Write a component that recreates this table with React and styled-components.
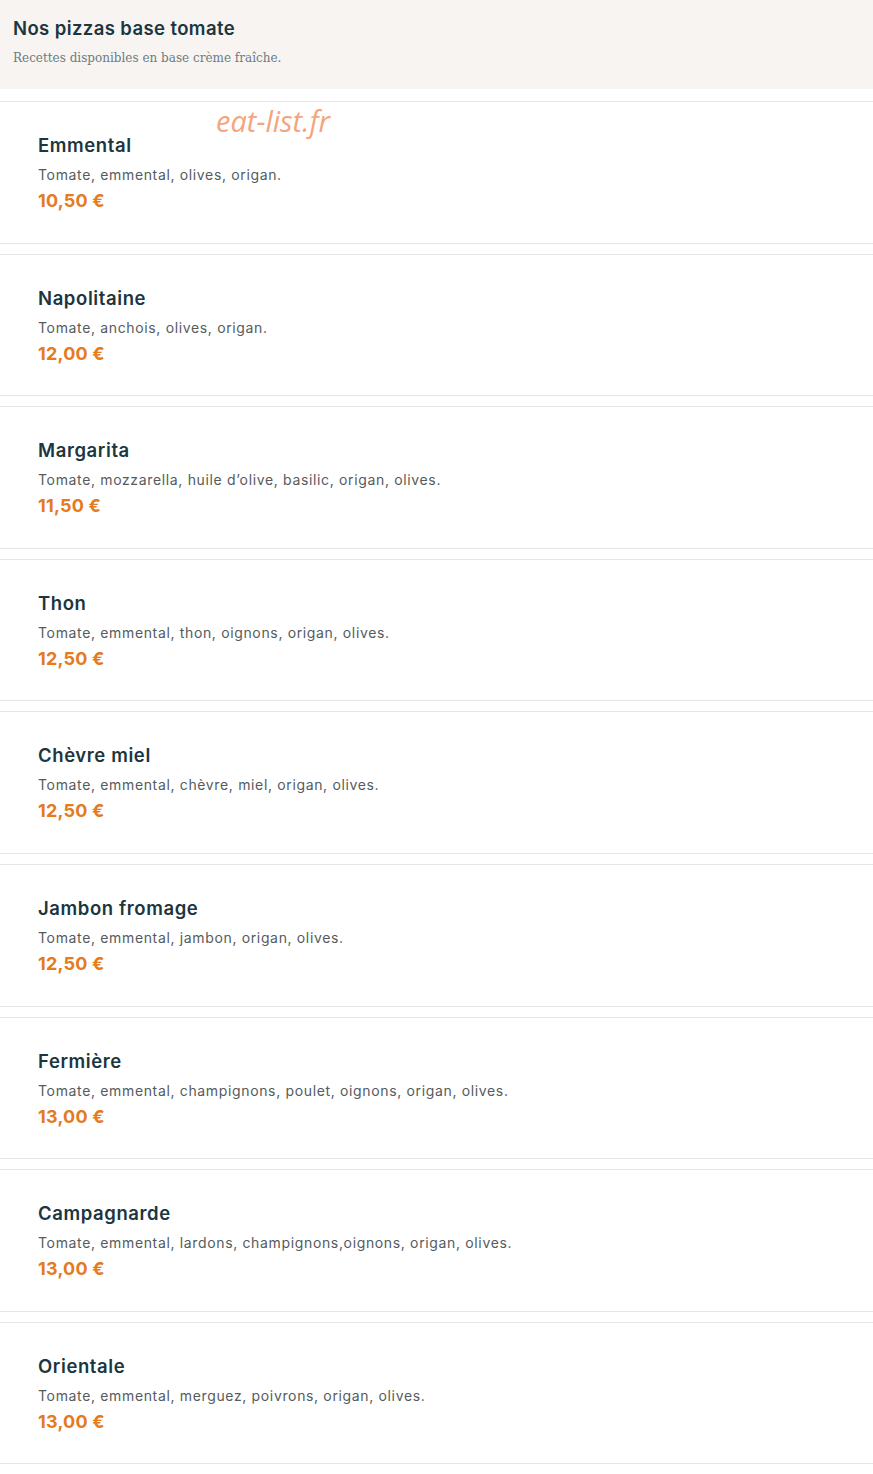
import React from 'react';
import styled, { createGlobalStyle } from 'styled-components';

const GlobalStyle = createGlobalStyle`
  body {
    margin: 0;
    background: #ffffff;
    font-family: 'Inter', 'Noto Sans', sans-serif;
  }
`;

const Page = styled.div`
  position: relative;
  width: 873px;
  padding-bottom: 10px;
`;

const Header = styled.header`
  background: #f7f4f1;
  height: 89px;
  box-sizing: border-box;
  padding: 16px 13px 0;

  h2 {
    margin: 0;
    font-family: 'Inter', sans-serif;
    font-size: 18.5px;
    font-weight: 600;
    line-height: 24px;
    color: #1b3640;
    letter-spacing: 0.4px;
  }

  p {
    margin: 10px 0 0;
    font-family: 'DejaVu Serif', serif;
    font-size: 12px;
    font-weight: 300;
    line-height: 16px;
    color: #6d7b82;
  }
`;

const List = styled.div`
  display: flex;
  flex-direction: column;
  gap: 10px;
  margin-top: 12px;
`;

const Card = styled.div`
  border-top: 1px solid #e6e6e6;
  border-bottom: 1px solid #e6e6e6;
  padding: 31px 38px 29.6px;

  h3 {
    margin: 0;
    font-size: 18.5px;
    font-weight: 600;
    line-height: 24px;
    color: #1b3640;
    letter-spacing: 0.6px;
  }

  p {
    margin: 8px 0 0;
    font-size: 14px;
    line-height: 20px;
    color: #555b5e;
    letter-spacing: 0.65px;
  }
`;

const Price = styled.div`
  margin-top: 4px;
  font-size: 18px;
  font-weight: 700;
  line-height: 24px;
  color: #e57a1e;
  letter-spacing: 0.2px;
`;

const Watermark = styled.div`
  position: absolute;
  top: 102px;
  left: 216px;
  font-family: 'Open Sans', sans-serif;
  font-style: italic;
  font-size: 29px;
  line-height: 38px;
  color: #f4a57d;
  pointer-events: none;
`;

const pizzas = [
  ['Emmental', 'Tomate, emmental, olives, origan.', '10,50 €'],
  ['Napolitaine', 'Tomate, anchois, olives, origan.', '12,00 €'],
  ['Margarita', 'Tomate, mozzarella, huile d’olive, basilic, origan, olives.', '11,50 €'],
  ['Thon', 'Tomate, emmental, thon, oignons, origan, olives.', '12,50 €'],
  ['Chèvre miel', 'Tomate, emmental, chèvre, miel, origan, olives.', '12,50 €'],
  ['Jambon fromage', 'Tomate, emmental, jambon, origan, olives.', '12,50 €'],
  ['Fermière', 'Tomate, emmental, champignons, poulet, oignons, origan, olives.', '13,00 €'],
  ['Campagnarde', 'Tomate, emmental, lardons, champignons,oignons, origan, olives.', '13,00 €'],
  ['Orientale', 'Tomate, emmental, merguez, poivrons, origan, olives.', '13,00 €'],
];

const App = () => (
  <Page>
    <GlobalStyle />
    <Header>
      <h2>Nos pizzas base tomate</h2>
      <p>Recettes disponibles en base crème fraîche.</p>
    </Header>
    <List>
      {pizzas.map(([name, desc, price]) => (
        <Card key={name}>
          <h3>{name}</h3>
          <p>{desc}</p>
          <Price>{price}</Price>
        </Card>
      ))}
    </List>
    <Watermark>eat-list.fr</Watermark>
  </Page>
);

export default App;
